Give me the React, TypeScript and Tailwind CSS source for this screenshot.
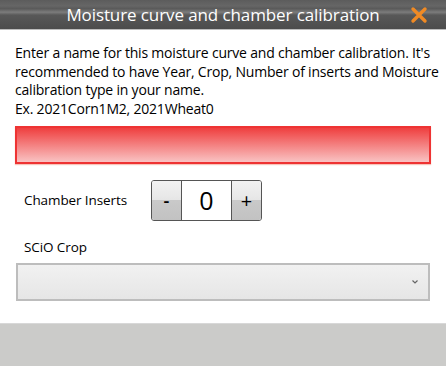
import React from "react";

export default function App() {
  const font = { fontFamily: '"Open Sans", "Noto Sans", sans-serif' };
  return (
    <div className="w-[446px] h-[366px] bg-white flex flex-col overflow-hidden" style={font}>
      <div className="h-[30px] shrink-0 relative flex items-center justify-center bg-[linear-gradient(to_bottom,#5c5c5c_0%,#666_20%,#5a5a5a_30%,#7c7c7c_42%,#585858_52%,#4c4c4c_100%)] border-b border-[#bdbdbd]">
        <span className="text-white text-[17px] leading-none tracking-[-0.1px]">Moisture curve and chamber calibration</span>
        <svg className="absolute left-[410px] top-[6px]" width="18" height="18" viewBox="0 0 18 18">
          <path d="M3 3 L15 15 M15 3 L3 15" stroke="#f08a24" strokeWidth="3.4" strokeLinecap="round" />
        </svg>
      </div>
      <div className="pl-[15px] pr-[4px] pt-[14px] text-[14px] leading-[18.5px] text-black tracking-[-0.2px]">
        <p>Enter a name for this moisture curve and chamber calibration. It's recommended to have Year, Crop, Number of inserts and Moisture calibration type in your name.</p>
        <p>Ex. 2021Corn1M2, 2021Wheat0</p>
      </div>
      <div className="mx-[15px] mt-[8px] h-[38px] border-2 border-[#ee3333] bg-[linear-gradient(to_bottom,#ef3f3f,#f9c3c3)] shadow-[0_1px_1px_rgba(240,140,120,0.5)]" />
      <div className="flex items-center mt-[16px] pl-[24px]">
        <span className="text-[13.5px] w-[127px] tracking-[-0.1px]">Chamber Inserts</span>
        <div className="flex h-[41px] w-[111px] border border-[#555] rounded-[3px] overflow-hidden">
          <div className="w-[30px] flex items-center justify-center text-[18px] font-semibold bg-[linear-gradient(to_bottom,#f2f2f2_0%,#e6e6e6_48%,#c9c9c9_50%,#c2c2c2_100%)] border-r border-[#555]">-</div>
          <div className="flex-1 flex items-center justify-center text-[25px] bg-white">0</div>
          <div className="w-[30px] flex items-center justify-center text-[20px] bg-[linear-gradient(to_bottom,#f2f2f2_0%,#e6e6e6_48%,#c9c9c9_50%,#c2c2c2_100%)] border-l border-[#555]">+</div>
        </div>
      </div>
      <div className="pl-[24px] mt-[17px] text-[13.5px] leading-[19px] tracking-[-0.1px]">SCiO Crop</div>
      <div className="mx-[16px] mt-[6px] h-[38px] border-2 border-[#bdbdbd] bg-[linear-gradient(to_bottom,#f1f1f1,#e6e6e6)] flex items-center justify-end pr-[9px]">
        <svg width="8" height="6" viewBox="0 0 8 6">
          <path d="M1.5 1.5 L4 4 L6.5 1.5" stroke="#666" strokeWidth="1.2" fill="none" />
        </svg>
      </div>
      <div className="mt-auto h-[43px] bg-[#cbcbc9] border-t border-[#d8d8d8]" />
    </div>
  );
}
